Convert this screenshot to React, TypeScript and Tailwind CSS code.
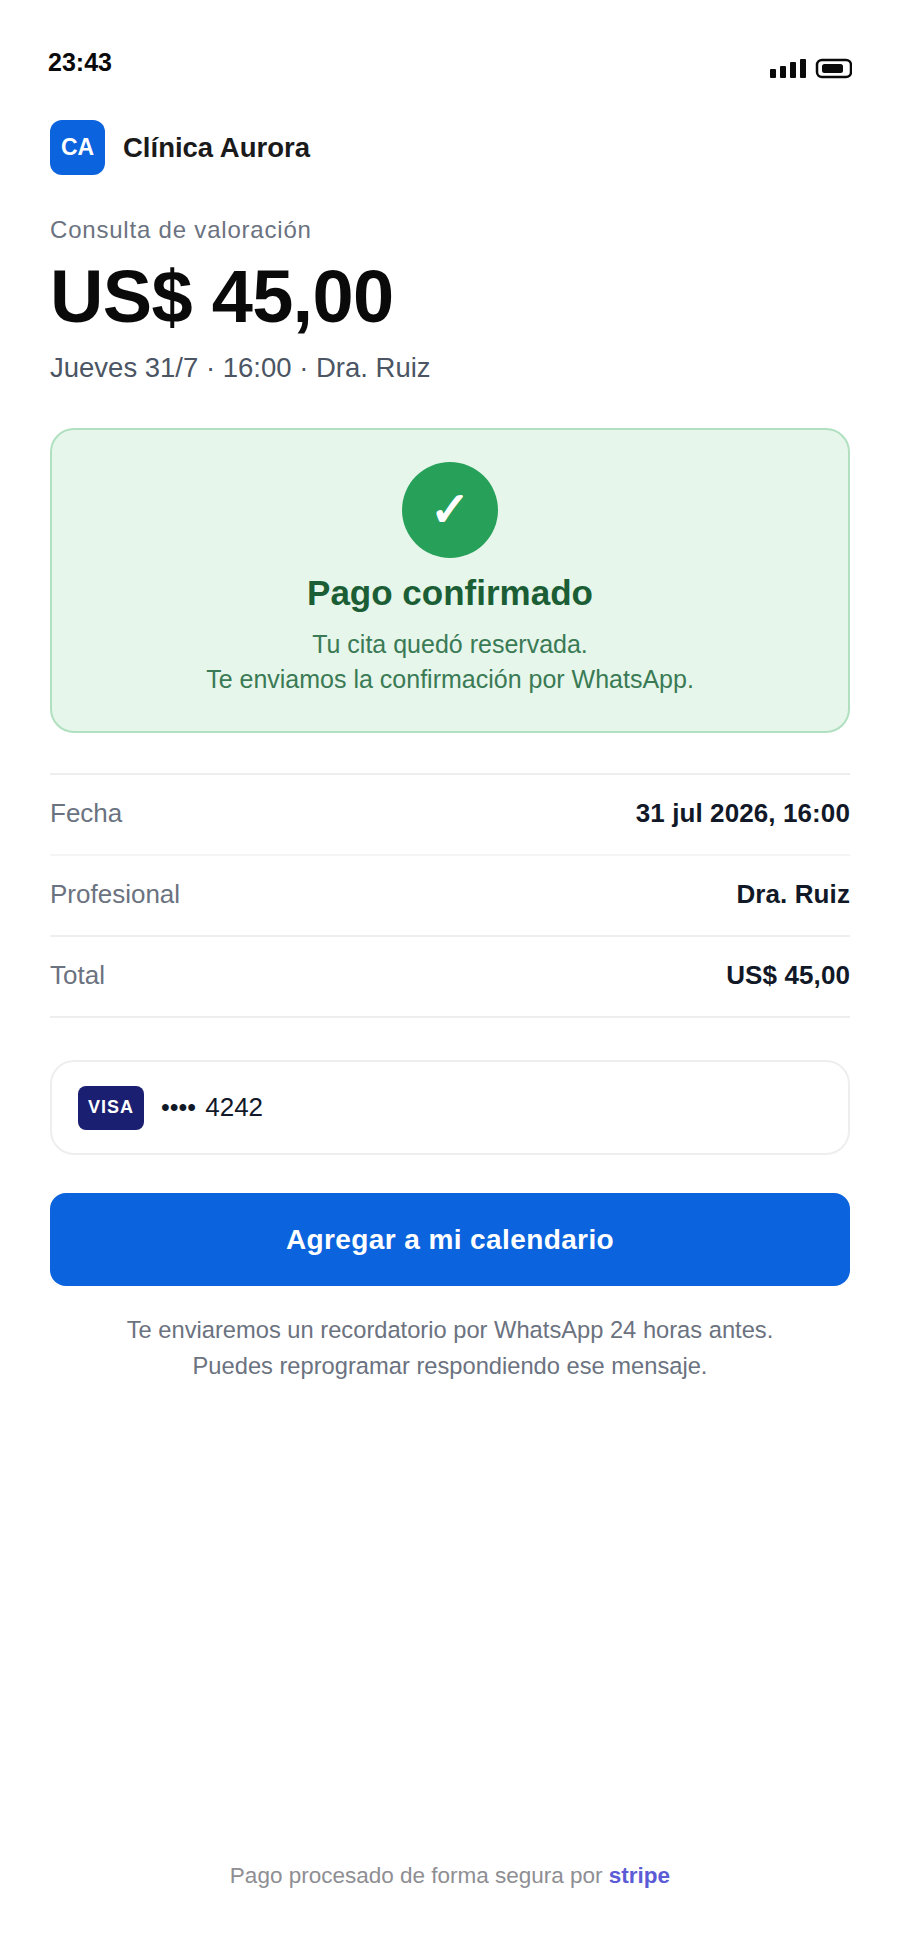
import React from 'react';

const rows = [
  { label: 'Fecha', value: '31 jul 2026, 16:00' },
  { label: 'Profesional', value: 'Dra. Ruiz' },
  { label: 'Total', value: 'US$ 45,00' },
];

function StatusIcons() {
  return (
    <svg width="82" height="22" viewBox="0 0 82 22" className="block">
      <rect x="0" y="11" width="6" height="9" rx="1" fill="#0a0a0a" />
      <rect x="10" y="8" width="6" height="12" rx="1" fill="#0a0a0a" />
      <rect x="20" y="4" width="6" height="16" rx="1" fill="#0a0a0a" />
      <rect x="30" y="1" width="6" height="19" rx="1" fill="#0a0a0a" />
      <rect x="47" y="2" width="34" height="17" rx="5" fill="none" stroke="#0a0a0a" strokeWidth="2.5" />
      <rect x="52" y="6" width="21" height="9" rx="2.5" fill="#0a0a0a" />
    </svg>
  );
}

export default function App() {
  return (
    <div className="w-[900px] h-[1948px] bg-white flex flex-col font-['Liberation_Sans',Arial,sans-serif]">
      {/* Status bar */}
      <div className="h-[120px] shrink-0 pl-[48px] pr-[48px] flex justify-between">
        <span className="mt-[46px] text-[25px] leading-[32px] font-bold text-[#0a0a0a]">23:43</span>
        <div className="mt-[58px]">
          <StatusIcons />
        </div>
      </div>

      <div className="px-[50px] flex flex-col flex-1">
        {/* Merchant */}
        <div className="flex items-center gap-[18px]">
          <div className="w-[55px] h-[55px] rounded-[12px] bg-[#0b63dd] flex items-center justify-center text-white font-bold text-[23px]">
            CA
          </div>
          <span className="text-[27.5px] font-bold text-[#1a1a1a]">Clínica Aurora</span>
        </div>

        {/* Summary */}
        <div className="mt-[39px] text-[24px] leading-[32px] tracking-[0.8px] text-[#6b7280]">Consulta de valoración</div>
        <div className="mt-[9px] text-[74px] leading-[84px] font-bold tracking-[-0.7px] text-[#0a0a0a]">US$ 45,00</div>
        <div className="mt-[9px] text-[27.5px] leading-[40px] text-[#4b5563]">Jueves 31/7 · 16:00 · Dra. Ruiz</div>

        {/* Confirmation */}
        <div className="mt-[40px] h-[305px] rounded-[24px] border-2 border-[#b0e0c0] bg-[#e6f6ea] flex flex-col items-center pt-[32px]">
          <div className="w-[96px] h-[96px] rounded-full bg-[#27a05a] flex items-center justify-center text-white text-[48px] font-bold">
            ✓
          </div>
          <div className="mt-[13px] text-[35px] leading-[44px] font-bold text-[#1b5e35]">Pago confirmado</div>
          <div className="mt-[12px] text-[25px] leading-[35px] text-[#3a7a55] text-center">
            <p>Tu cita quedó reservada.</p>
            <p>Te enviamos la confirmación por WhatsApp.</p>
          </div>
        </div>

        {/* Details */}
        <div className="mt-[40px] border-t-2 border-[#eeeeee]">
          {rows.map((row, i) => (
            <div
              key={row.label}
              className={`h-[81px] pb-[2px] flex items-center justify-between border-b-2 ${i === 0 ? 'border-[#f5f5f5]' : 'border-[#eeeeee]'}`}
            >
              <span className="text-[26px] text-[#6b7280]">{row.label}</span>
              <span className="text-[26px] tracking-[0.1px] font-bold text-[#111827]">{row.value}</span>
            </div>
          ))}
        </div>

        {/* Card */}
        <div className="mt-[42px] h-[95px] rounded-[24px] border-2 border-[#eeeeee] flex items-center pl-[26px] gap-[17px]">
          <div className="w-[66px] h-[44px] rounded-[8px] bg-[#1a1f71] flex items-center justify-center text-white font-bold text-[18px] tracking-[1px]">
            VISA
          </div>
          <span className="text-[26px] text-[#111827]">
            <span className="text-[25px] mr-[2px]">••••</span> 4242
          </span>
        </div>

        {/* Button */}
        <button className="mt-[38px] h-[93px] rounded-[16px] bg-[#0b63dd] text-white text-[28px] tracking-[0.4px] font-bold">
          Agregar a mi calendario
        </button>

        <div className="mt-[26px] text-[23.7px] leading-[36px] text-[#6b7280] text-center">
          <p>Te enviaremos un recordatorio por WhatsApp 24 horas antes.</p>
          <p>Puedes reprogramar respondiendo ese mensaje.</p>
        </div>

        {/* Footer */}
        <div className="mt-auto mb-[56px] text-[22.5px] leading-[32px] text-center text-[#8e8e93]">
          Pago procesado de forma segura por <span className="font-bold text-[#5b5bd6]">stripe</span>
        </div>
      </div>
    </div>
  );
}
